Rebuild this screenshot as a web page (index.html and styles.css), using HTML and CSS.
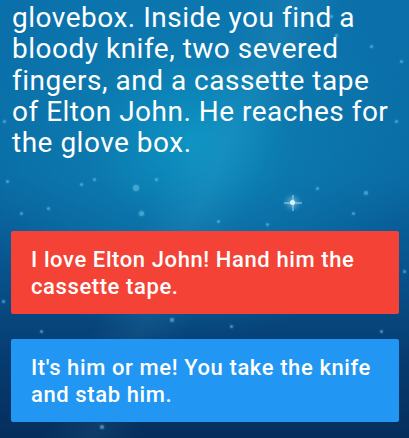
FILE: index.html
```html
<!DOCTYPE html>
<html>
<head>
<meta charset="utf-8">
<link rel="stylesheet" href="styles.css">
</head>
<body>
<div class="scene">
  <div class="stars">
    <span class="dot" style="left:133px;top:185px;width:6px;height:6px"></span>
    <span class="dot" style="left:364px;top:191px;width:4px;height:4px"></span>
    <span class="dot" style="left:352px;top:212px;width:3px;height:3px"></span>
    <span class="dot" style="left:139px;top:211px;width:5px;height:5px"></span>
    <span class="dot" style="left:47px;top:207px;width:3px;height:3px"></span>
    <span class="dot" style="left:20px;top:212px;width:3px;height:3px"></span>
    <span class="dot" style="left:80px;top:183px;width:3px;height:3px"></span>
    <span class="dot" style="left:93px;top:178px;width:3px;height:3px"></span>
    <span class="dot" style="left:155px;top:178px;width:3px;height:3px"></span>
    <span class="dot" style="left:217px;top:220px;width:3px;height:3px"></span>
    <span class="dot" style="left:266px;top:223px;width:3px;height:3px"></span>
    <span class="dot" style="left:316px;top:187px;width:3px;height:3px"></span>
    <span class="dot" style="left:330px;top:15px;width:3px;height:3px"></span>
    <span class="dot" style="left:370px;top:45px;width:3px;height:3px"></span>
    <span class="dot" style="left:335px;top:34px;width:3px;height:3px"></span>
    <span class="dot" style="left:395px;top:120px;width:3px;height:3px"></span>
    <span class="dot" style="left:400px;top:60px;width:3px;height:3px"></span>
    <span class="dot" style="left:100px;top:425px;width:4px;height:4px"></span>
    <span class="dot" style="left:170px;top:318px;width:4px;height:4px"></span>
    <span class="dot" style="left:40px;top:330px;width:3px;height:3px"></span>
    <span class="dot" style="left:230px;top:325px;width:3px;height:3px"></span>
    <span class="dot" style="left:380px;top:330px;width:3px;height:3px"></span>
    <span class="dot" style="left:3px;top:120px;width:3px;height:3px"></span>
    <span class="dot" style="left:6px;top:180px;width:3px;height:3px"></span>
    <span class="dot" style="left:403px;top:270px;width:3px;height:3px"></span>
    <span class="dot" style="left:2px;top:300px;width:3px;height:3px"></span>
    <span class="spark" style="left:290px;top:200px"></span>
  </div>
  <div class="content">
    <p class="story">glovebox. Inside you find a bloody knife, two severed fingers, and a cassette tape of Elton John. He reaches for the glove box.</p>
    <div class="choices">
      <button class="choice choice-red">I love Elton John! Hand him the cassette tape.</button>
      <button class="choice choice-blue">It's him or me! You take the knife and stab him.</button>
    </div>
  </div>
</div>
</body>
</html>
```

FILE: styles.css
```css
html, body {
  margin: 0;
  padding: 0;
}
body {
  width: 409px;
  height: 438px;
  overflow: hidden;
  font-family: Roboto, "Noto Sans", sans-serif;
}
.scene {
  position: relative;
  width: 409px;
  height: 438px;
  overflow: hidden;
  background:
    linear-gradient(115deg, rgba(255,255,255,0) 40%, rgba(120,210,240,0.08) 48%, rgba(255,255,255,0) 56%),
    radial-gradient(ellipse 230px 200px at 190px 140px, #0d93c2 0%, rgba(13,128,180,0.6) 45%, rgba(10,100,160,0) 100%),
    linear-gradient(180deg, #0b70aa 0%, #0a6ba4 40%, #08528c 62%, #063c70 82%, #052e5c 100%);
}
.stars {
  position: absolute;
  inset: 0;
  pointer-events: none;
}
.dot {
  position: absolute;
  border-radius: 50%;
  background: rgba(110, 200, 240, 0.55);
  box-shadow: 0 0 3px rgba(110, 200, 240, 0.5);
}
.spark {
  position: absolute;
  width: 5px;
  height: 5px;
  border-radius: 50%;
  background: #e6f8ff;
  box-shadow: 0 0 6px 2px rgba(180, 235, 255, 0.7);
}
.spark::before,
.spark::after {
  content: "";
  position: absolute;
  left: 50%;
  top: 50%;
  background: rgba(200, 240, 255, 0.8);
}
.spark::before {
  width: 18px;
  height: 1px;
  transform: translate(-50%, -50%);
}
.spark::after {
  width: 1px;
  height: 16px;
  transform: translate(-50%, -50%);
}
.content {
  position: relative;
  padding: 1px 10px 0 11px;
}
.story {
  margin: 1px 7px 0 1px;
  color: #ffffff;
  font-size: 28px;
  letter-spacing: 0.5px;
  line-height: 31.3px;
  font-weight: 400;
}
.choices {
  display: flex;
  flex-direction: column;
  gap: 25px;
  margin-top: 73px;
}
.choice {
  display: block;
  width: 100%;
  border: none;
  border-radius: 2px;
  padding: 15px 20px 14px 20px;
  text-align: left;
  color: #ffffff;
  font-family: Roboto, "Noto Sans", sans-serif;
  font-size: 22px;
  letter-spacing: 0.6px;
  font-weight: 500;
  line-height: 27px;
  min-height: 83px;
}
.choice-red {
  background: #f44336;
}
.choice-blue {
  background: #2196f3;
}
```
